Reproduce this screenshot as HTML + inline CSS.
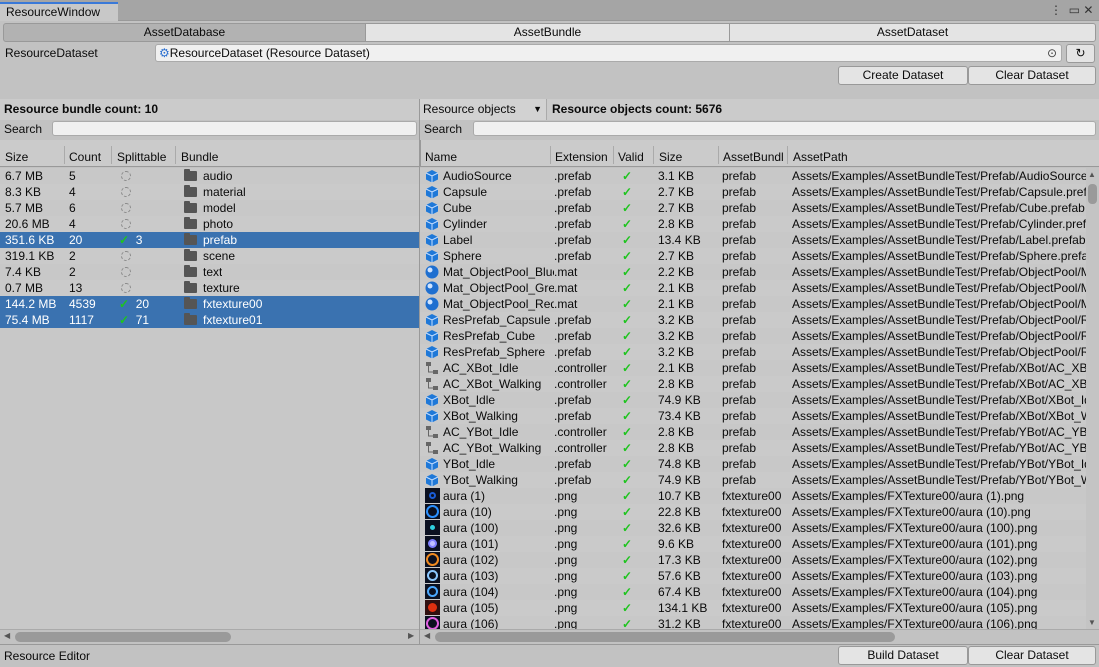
<!DOCTYPE html>
<html><head><meta charset="utf-8"><style>
*{box-sizing:border-box;margin:0;padding:0}
body{width:1099px;height:667px;background:#c2c2c2;font-family:"Liberation Sans",sans-serif;font-size:12px;color:#0a0a0a;position:relative;overflow:hidden}
.a{position:absolute}
.btn{position:absolute;background:#e4e4e4;border:1px solid #999;border-radius:3px;text-align:center;line-height:17px;font-size:12px}
.row{position:absolute;height:16px;line-height:16px;display:flex;white-space:nowrap}
.row>span{overflow:hidden;display:block;flex:none}
.sel{background:#3a72b0;color:#fff}
.ev{background:#cacaca}
.od{background:#c8c8c8}
.ic{display:inline-block;width:14px;height:14px;vertical-align:-3px;margin-right:4px}
.fold{display:inline-block;width:13px;height:10px;background:#555;border-radius:1px;vertical-align:-1px;margin-right:6px;position:relative}
.fold:before{content:"";position:absolute;left:0;top:-2px;width:6px;height:3px;background:#555;border-radius:1px 1px 0 0}
.chk{color:#1ec41e;font-weight:bold}
.dot{display:inline-block;width:10px;height:10px;border:1px dashed #888;border-radius:50%;vertical-align:-1px}
.hdr{position:absolute;height:27px;background:#cbcbcb;border-bottom:1px solid #999}
.hdr span{position:absolute;top:10px}
.hdr i{position:absolute;top:6px;width:1px;height:18px;background:#aaa}
.search{position:absolute;height:15px;background:#f0f0f0;border:1px solid #aaa;border-radius:3px}
.png{display:inline-block;width:15px;height:15px;background:#0b1020;vertical-align:-3px;margin-right:3px;position:relative}
.png b{position:absolute;left:3px;top:3px;width:9px;height:9px;border-radius:50%;border:2px solid #2a8cff}
</style></head><body>
<div class="a" style="left:0;top:0;width:1099px;height:21px;background:#a5a5a5;border-bottom:1px solid #999"></div>
<div class="a" style="left:0;top:2px;width:118px;height:19px;background:#c8c8c8;border-top:2px solid #3a79d8;line-height:16px;padding-left:6px">ResourceWindow</div>
<div class="a" style="left:1050px;top:3px;font-size:12px;color:#333">⋮ &nbsp;▭ ✕</div>
<div class="btn" style="left:3px;top:23px;width:363px;height:19px;background:#b2b2b2;border-radius:3px 0 0 3px">AssetDatabase</div>
<div class="btn" style="left:365px;top:23px;width:365px;height:19px;border-radius:0">AssetBundle</div>
<div class="btn" style="left:729px;top:23px;width:367px;height:19px;border-radius:0 3px 3px 0">AssetDataset</div>
<div class="a" style="left:5px;top:46px">ResourceDataset</div>
<div class="a" style="left:155px;top:44px;width:907px;height:18px;background:#f0f0f0;border:1px solid #aaa;border-radius:3px;line-height:16px;padding-left:3px"><span style="color:#2a6fd0">⚙</span>ResourceDataset (Resource Dataset)<span style="position:absolute;right:4px;color:#444">⊙</span></div>
<div class="btn" style="left:1066px;top:44px;width:29px;height:19px">↻</div>
<div class="btn" style="left:838px;top:66px;width:130px;height:19px">Create Dataset</div>
<div class="btn" style="left:968px;top:66px;width:128px;height:19px">Clear Dataset</div>
<div class="a" style="left:0;top:99px;width:419px;height:21px;background:#cbcbcb;font-weight:bold;line-height:20px;padding-left:4px">Resource bundle count: 10</div>
<div class="a" style="left:0;top:120px;width:419px;height:20px;background:#c2c2c2;line-height:18px;padding-left:4px">Search</div>
<div class="search" style="left:52px;top:121px;width:365px"></div>
<div class="hdr" style="left:0;top:140px;width:419px"><span style="left:5px">Size</span><i style="left:64px"></i><span style="left:69px">Count</span><i style="left:111px"></i><span style="left:117px">Splittable</span><i style="left:175px"></i><span style="left:181px">Bundle</span></div>
<div class="a" style="left:0;top:168px;width:419px;height:461px;background:#c8c8c8"></div>
<div class="a" style="left:419px;top:99px;width:1px;height:545px;background:#999"></div>
<div class="a" style="left:420px;top:99px;width:679px;height:21px;background:#cbcbcb"></div>
<div class="a" style="left:420px;top:99px;width:127px;height:21px;background:#d2d2d2;border-right:1px solid #aaa;line-height:20px;padding-left:3px">Resource objects <span style="position:absolute;right:4px;font-size:9px">▼</span></div>
<div class="a" style="left:552px;top:99px;font-weight:bold;line-height:20px">Resource objects count: 5676</div>
<div class="a" style="left:424px;top:120px;line-height:18px">Search</div>
<div class="search" style="left:473px;top:121px;width:623px"></div>
<div class="hdr" style="left:420px;top:140px;width:679px;border-left:1px solid #999"><span style="left:4px">Name</span><i style="left:129px"></i><span style="left:134px">Extension</span><i style="left:192px"></i><span style="left:197px">Valid</span><i style="left:232px"></i><span style="left:238px">Size</span><i style="left:297px"></i><span style="left:302px">AssetBundl</span><i style="left:366px"></i><span style="left:372px">AssetPath</span></div>

<div class="row od" style="left:0;top:168px;width:419px"><span style="width:69px;padding-left:5px">6.7 MB</span><span style="width:50px">5</span><span style="width:65px;padding-left:2px"><i class="dot"></i></span><span><i class="fold"></i>audio</span></div>
<div class="row ev" style="left:0;top:184px;width:419px"><span style="width:69px;padding-left:5px">8.3 KB</span><span style="width:50px">4</span><span style="width:65px;padding-left:2px"><i class="dot"></i></span><span><i class="fold"></i>material</span></div>
<div class="row od" style="left:0;top:200px;width:419px"><span style="width:69px;padding-left:5px">5.7 MB</span><span style="width:50px">6</span><span style="width:65px;padding-left:2px"><i class="dot"></i></span><span><i class="fold"></i>model</span></div>
<div class="row ev" style="left:0;top:216px;width:419px"><span style="width:69px;padding-left:5px">20.6 MB</span><span style="width:50px">4</span><span style="width:65px;padding-left:2px"><i class="dot"></i></span><span><i class="fold"></i>photo</span></div>
<div class="row sel" style="left:0;top:232px;width:419px"><span style="width:69px;padding-left:5px">351.6 KB</span><span style="width:50px">20</span><span style="width:65px"><b class="chk">✓</b> &nbsp;3</span><span><i class="fold"></i>prefab</span></div>
<div class="row ev" style="left:0;top:248px;width:419px"><span style="width:69px;padding-left:5px">319.1 KB</span><span style="width:50px">2</span><span style="width:65px;padding-left:2px"><i class="dot"></i></span><span><i class="fold"></i>scene</span></div>
<div class="row od" style="left:0;top:264px;width:419px"><span style="width:69px;padding-left:5px">7.4 KB</span><span style="width:50px">2</span><span style="width:65px;padding-left:2px"><i class="dot"></i></span><span><i class="fold"></i>text</span></div>
<div class="row ev" style="left:0;top:280px;width:419px"><span style="width:69px;padding-left:5px">0.7 MB</span><span style="width:50px">13</span><span style="width:65px;padding-left:2px"><i class="dot"></i></span><span><i class="fold"></i>texture</span></div>
<div class="row sel" style="left:0;top:296px;width:419px"><span style="width:69px;padding-left:5px">144.2 MB</span><span style="width:50px">4539</span><span style="width:65px"><b class="chk">✓</b> &nbsp;20</span><span><i class="fold"></i>fxtexture00</span></div>
<div class="row sel" style="left:0;top:312px;width:419px"><span style="width:69px;padding-left:5px">75.4 MB</span><span style="width:50px">1117</span><span style="width:65px"><b class="chk">✓</b> &nbsp;71</span><span><i class="fold"></i>fxtexture01</span></div>

<div class="a" style="left:420px;top:168px;width:666px;height:461px;overflow:hidden;background:#c8c8c8">
<svg width="0" height="0" style="position:absolute"><defs>
<symbol id="cube" viewBox="0 0 14 14"><path d="M7 1 L13 4 L13 10.5 L7 13.5 L1 10.5 L1 4Z" fill="#1e78d8"/><path d="M1 4 L7 7 L13 4 M7 7 V13.5" stroke="#c8e0ff" stroke-width="1" fill="none"/></symbol>
<symbol id="mat" viewBox="0 0 14 14"><circle cx="7" cy="7" r="6.5" fill="#1e6fd0"/><circle cx="5" cy="5" r="2.5" fill="#cfe4ff"/></symbol>
<symbol id="ctl" viewBox="0 0 14 14"><rect x="1" y="1" width="5" height="4" fill="#666"/><rect x="8" y="9" width="5" height="4" fill="#666"/><path d="M3.5 5 V11 H8" stroke="#666" fill="none"/></symbol>
</defs></svg>
<div style="position:relative">
<div class="row od" style="left:0;top:0;width:666px"><span style="width:134px;padding-left:5px"><svg class="ic"><use href="#cube"/></svg>AudioSource</span><span style="width:63px">.prefab</span><span style="width:41px;padding-left:5px" class="chk">✓</span><span style="width:64px">3.1 KB</span><span style="width:70px">prefab</span><span>Assets/Examples/AssetBundleTest/Prefab/AudioSource.prefab</span></div>
<div class="row ev" style="left:0;top:16px;width:666px"><span style="width:134px;padding-left:5px"><svg class="ic"><use href="#cube"/></svg>Capsule</span><span style="width:63px">.prefab</span><span style="width:41px;padding-left:5px" class="chk">✓</span><span style="width:64px">2.7 KB</span><span style="width:70px">prefab</span><span>Assets/Examples/AssetBundleTest/Prefab/Capsule.prefab</span></div>
<div class="row od" style="left:0;top:32px;width:666px"><span style="width:134px;padding-left:5px"><svg class="ic"><use href="#cube"/></svg>Cube</span><span style="width:63px">.prefab</span><span style="width:41px;padding-left:5px" class="chk">✓</span><span style="width:64px">2.7 KB</span><span style="width:70px">prefab</span><span>Assets/Examples/AssetBundleTest/Prefab/Cube.prefab</span></div>
<div class="row ev" style="left:0;top:48px;width:666px"><span style="width:134px;padding-left:5px"><svg class="ic"><use href="#cube"/></svg>Cylinder</span><span style="width:63px">.prefab</span><span style="width:41px;padding-left:5px" class="chk">✓</span><span style="width:64px">2.8 KB</span><span style="width:70px">prefab</span><span>Assets/Examples/AssetBundleTest/Prefab/Cylinder.prefab</span></div>
<div class="row od" style="left:0;top:64px;width:666px"><span style="width:134px;padding-left:5px"><svg class="ic"><use href="#cube"/></svg>Label</span><span style="width:63px">.prefab</span><span style="width:41px;padding-left:5px" class="chk">✓</span><span style="width:64px">13.4 KB</span><span style="width:70px">prefab</span><span>Assets/Examples/AssetBundleTest/Prefab/Label.prefab</span></div>
<div class="row ev" style="left:0;top:80px;width:666px"><span style="width:134px;padding-left:5px"><svg class="ic"><use href="#cube"/></svg>Sphere</span><span style="width:63px">.prefab</span><span style="width:41px;padding-left:5px" class="chk">✓</span><span style="width:64px">2.7 KB</span><span style="width:70px">prefab</span><span>Assets/Examples/AssetBundleTest/Prefab/Sphere.prefab</span></div>
<div class="row od" style="left:0;top:96px;width:666px"><span style="width:134px;padding-left:5px"><svg class="ic"><use href="#mat"/></svg>Mat_ObjectPool_Blue</span><span style="width:63px">.mat</span><span style="width:41px;padding-left:5px" class="chk">✓</span><span style="width:64px">2.2 KB</span><span style="width:70px">prefab</span><span>Assets/Examples/AssetBundleTest/Prefab/ObjectPool/Mat</span></div>
<div class="row ev" style="left:0;top:112px;width:666px"><span style="width:134px;padding-left:5px"><svg class="ic"><use href="#mat"/></svg>Mat_ObjectPool_Green</span><span style="width:63px">.mat</span><span style="width:41px;padding-left:5px" class="chk">✓</span><span style="width:64px">2.1 KB</span><span style="width:70px">prefab</span><span>Assets/Examples/AssetBundleTest/Prefab/ObjectPool/Mat</span></div>
<div class="row od" style="left:0;top:128px;width:666px"><span style="width:134px;padding-left:5px"><svg class="ic"><use href="#mat"/></svg>Mat_ObjectPool_Red</span><span style="width:63px">.mat</span><span style="width:41px;padding-left:5px" class="chk">✓</span><span style="width:64px">2.1 KB</span><span style="width:70px">prefab</span><span>Assets/Examples/AssetBundleTest/Prefab/ObjectPool/Mat</span></div>
<div class="row ev" style="left:0;top:144px;width:666px"><span style="width:134px;padding-left:5px"><svg class="ic"><use href="#cube"/></svg>ResPrefab_Capsule</span><span style="width:63px">.prefab</span><span style="width:41px;padding-left:5px" class="chk">✓</span><span style="width:64px">3.2 KB</span><span style="width:70px">prefab</span><span>Assets/Examples/AssetBundleTest/Prefab/ObjectPool/Res</span></div>
<div class="row od" style="left:0;top:160px;width:666px"><span style="width:134px;padding-left:5px"><svg class="ic"><use href="#cube"/></svg>ResPrefab_Cube</span><span style="width:63px">.prefab</span><span style="width:41px;padding-left:5px" class="chk">✓</span><span style="width:64px">3.2 KB</span><span style="width:70px">prefab</span><span>Assets/Examples/AssetBundleTest/Prefab/ObjectPool/Res</span></div>
<div class="row ev" style="left:0;top:176px;width:666px"><span style="width:134px;padding-left:5px"><svg class="ic"><use href="#cube"/></svg>ResPrefab_Sphere</span><span style="width:63px">.prefab</span><span style="width:41px;padding-left:5px" class="chk">✓</span><span style="width:64px">3.2 KB</span><span style="width:70px">prefab</span><span>Assets/Examples/AssetBundleTest/Prefab/ObjectPool/Res</span></div>
<div class="row od" style="left:0;top:192px;width:666px"><span style="width:134px;padding-left:5px"><svg class="ic"><use href="#ctl"/></svg>AC_XBot_Idle</span><span style="width:63px">.controller</span><span style="width:41px;padding-left:5px" class="chk">✓</span><span style="width:64px">2.1 KB</span><span style="width:70px">prefab</span><span>Assets/Examples/AssetBundleTest/Prefab/XBot/AC_XBot</span></div>
<div class="row ev" style="left:0;top:208px;width:666px"><span style="width:134px;padding-left:5px"><svg class="ic"><use href="#ctl"/></svg>AC_XBot_Walking</span><span style="width:63px">.controller</span><span style="width:41px;padding-left:5px" class="chk">✓</span><span style="width:64px">2.8 KB</span><span style="width:70px">prefab</span><span>Assets/Examples/AssetBundleTest/Prefab/XBot/AC_XBot</span></div>
<div class="row od" style="left:0;top:224px;width:666px"><span style="width:134px;padding-left:5px"><svg class="ic"><use href="#cube"/></svg>XBot_Idle</span><span style="width:63px">.prefab</span><span style="width:41px;padding-left:5px" class="chk">✓</span><span style="width:64px">74.9 KB</span><span style="width:70px">prefab</span><span>Assets/Examples/AssetBundleTest/Prefab/XBot/XBot_Idle</span></div>
<div class="row ev" style="left:0;top:240px;width:666px"><span style="width:134px;padding-left:5px"><svg class="ic"><use href="#cube"/></svg>XBot_Walking</span><span style="width:63px">.prefab</span><span style="width:41px;padding-left:5px" class="chk">✓</span><span style="width:64px">73.4 KB</span><span style="width:70px">prefab</span><span>Assets/Examples/AssetBundleTest/Prefab/XBot/XBot_Walk</span></div>
<div class="row od" style="left:0;top:256px;width:666px"><span style="width:134px;padding-left:5px"><svg class="ic"><use href="#ctl"/></svg>AC_YBot_Idle</span><span style="width:63px">.controller</span><span style="width:41px;padding-left:5px" class="chk">✓</span><span style="width:64px">2.8 KB</span><span style="width:70px">prefab</span><span>Assets/Examples/AssetBundleTest/Prefab/YBot/AC_YBot</span></div>
<div class="row ev" style="left:0;top:272px;width:666px"><span style="width:134px;padding-left:5px"><svg class="ic"><use href="#ctl"/></svg>AC_YBot_Walking</span><span style="width:63px">.controller</span><span style="width:41px;padding-left:5px" class="chk">✓</span><span style="width:64px">2.8 KB</span><span style="width:70px">prefab</span><span>Assets/Examples/AssetBundleTest/Prefab/YBot/AC_YBot</span></div>
<div class="row od" style="left:0;top:288px;width:666px"><span style="width:134px;padding-left:5px"><svg class="ic"><use href="#cube"/></svg>YBot_Idle</span><span style="width:63px">.prefab</span><span style="width:41px;padding-left:5px" class="chk">✓</span><span style="width:64px">74.8 KB</span><span style="width:70px">prefab</span><span>Assets/Examples/AssetBundleTest/Prefab/YBot/YBot_Idle</span></div>
<div class="row ev" style="left:0;top:304px;width:666px"><span style="width:134px;padding-left:5px"><svg class="ic"><use href="#cube"/></svg>YBot_Walking</span><span style="width:63px">.prefab</span><span style="width:41px;padding-left:5px" class="chk">✓</span><span style="width:64px">74.9 KB</span><span style="width:70px">prefab</span><span>Assets/Examples/AssetBundleTest/Prefab/YBot/YBot_Walk</span></div>
<div class="row od" style="left:0;top:320px;width:666px"><span style="width:134px;padding-left:5px"><i class="png"><b style="border-color:#1a5cd8;left:4px;top:4px;width:7px;height:7px"></b></i>aura (1)</span><span style="width:63px">.png</span><span style="width:41px;padding-left:5px" class="chk">✓</span><span style="width:64px">10.7 KB</span><span style="width:70px">fxtexture00</span><span>Assets/Examples/FXTexture00/aura (1).png</span></div>
<div class="row ev" style="left:0;top:336px;width:666px"><span style="width:134px;padding-left:5px"><i class="png"><b style="left:1px;top:1px;width:13px;height:13px;border-color:#2a90ff"></b></i>aura (10)</span><span style="width:63px">.png</span><span style="width:41px;padding-left:5px" class="chk">✓</span><span style="width:64px">22.8 KB</span><span style="width:70px">fxtexture00</span><span>Assets/Examples/FXTexture00/aura (10).png</span></div>
<div class="row od" style="left:0;top:352px;width:666px"><span style="width:134px;padding-left:5px"><i class="png"><b style="border-color:#30d0e0;background:#30d0e0;left:5px;top:5px;width:5px;height:5px"></b></i>aura (100)</span><span style="width:63px">.png</span><span style="width:41px;padding-left:5px" class="chk">✓</span><span style="width:64px">32.6 KB</span><span style="width:70px">fxtexture00</span><span>Assets/Examples/FXTexture00/aura (100).png</span></div>
<div class="row ev" style="left:0;top:368px;width:666px"><span style="width:134px;padding-left:5px"><i class="png"><b style="border-color:#8080ff;background:#c0c0ff"></b></i>aura (101)</span><span style="width:63px">.png</span><span style="width:41px;padding-left:5px" class="chk">✓</span><span style="width:64px">9.6 KB</span><span style="width:70px">fxtexture00</span><span>Assets/Examples/FXTexture00/aura (101).png</span></div>
<div class="row od" style="left:0;top:384px;width:666px"><span style="width:134px;padding-left:5px"><i class="png"><b style="left:1px;top:1px;width:13px;height:13px;border-color:#f08a20"></b></i>aura (102)</span><span style="width:63px">.png</span><span style="width:41px;padding-left:5px" class="chk">✓</span><span style="width:64px">17.3 KB</span><span style="width:70px">fxtexture00</span><span>Assets/Examples/FXTexture00/aura (102).png</span></div>
<div class="row ev" style="left:0;top:400px;width:666px"><span style="width:134px;padding-left:5px"><i class="png"><b style="left:2px;top:2px;width:11px;height:11px;border-color:#8cc8ff"></b></i>aura (103)</span><span style="width:63px">.png</span><span style="width:41px;padding-left:5px" class="chk">✓</span><span style="width:64px">57.6 KB</span><span style="width:70px">fxtexture00</span><span>Assets/Examples/FXTexture00/aura (103).png</span></div>
<div class="row od" style="left:0;top:416px;width:666px"><span style="width:134px;padding-left:5px"><i class="png"><b style="left:2px;top:2px;width:11px;height:11px;border-color:#4aa8ff"></b></i>aura (104)</span><span style="width:63px">.png</span><span style="width:41px;padding-left:5px" class="chk">✓</span><span style="width:64px">67.4 KB</span><span style="width:70px">fxtexture00</span><span>Assets/Examples/FXTexture00/aura (104).png</span></div>
<div class="row ev" style="left:0;top:432px;width:666px"><span style="width:134px;padding-left:5px"><i class="png" style="background:#301010"><b style="border-color:#e03010;background:#e03010"></b></i>aura (105)</span><span style="width:63px">.png</span><span style="width:41px;padding-left:5px" class="chk">✓</span><span style="width:64px">134.1 KB</span><span style="width:70px">fxtexture00</span><span>Assets/Examples/FXTexture00/aura (105).png</span></div>
<div class="row od" style="left:0;top:448px;width:666px"><span style="width:134px;padding-left:5px"><i class="png"><b style="left:1px;top:1px;width:13px;height:13px;border-color:#e060e0"></b></i>aura (106)</span><span style="width:63px">.png</span><span style="width:41px;padding-left:5px" class="chk">✓</span><span style="width:64px">31.2 KB</span><span style="width:70px">fxtexture00</span><span>Assets/Examples/FXTexture00/aura (106).png</span></div>
</div></div>
<div class="a" style="left:1086px;top:168px;width:13px;height:461px;background:#c4c4c4"></div>
<div class="a" style="left:1088px;top:170px;font-size:8px;color:#555">▲</div>
<div class="a" style="left:1088px;top:184px;width:9px;height:20px;background:#9a9a9a;border-radius:4px"></div>
<div class="a" style="left:1088px;top:618px;font-size:8px;color:#555">▼</div>
<div class="a" style="left:0;top:629px;width:419px;height:15px;background:#c2c2c2;border-top:1px solid #aaa"></div>
<div class="a" style="left:4px;top:631px;font-size:8px;color:#555">◀</div>
<div class="a" style="left:15px;top:632px;width:216px;height:10px;background:#9a9a9a;border-radius:5px"></div>
<div class="a" style="left:408px;top:631px;font-size:8px;color:#555">▶</div>
<div class="a" style="left:420px;top:629px;width:679px;height:15px;background:#c2c2c2;border-top:1px solid #aaa"></div>
<div class="a" style="left:424px;top:631px;font-size:8px;color:#555">◀</div>
<div class="a" style="left:435px;top:632px;width:460px;height:10px;background:#9a9a9a;border-radius:5px"></div>
<div class="a" style="left:0;top:644px;width:1099px;height:1px;background:#999"></div>
<div class="a" style="left:4px;top:649px">Resource Editor</div>
<div class="btn" style="left:838px;top:646px;width:130px;height:19px">Build Dataset</div>
<div class="btn" style="left:968px;top:646px;width:128px;height:19px">Clear Dataset</div>
</body></html>
